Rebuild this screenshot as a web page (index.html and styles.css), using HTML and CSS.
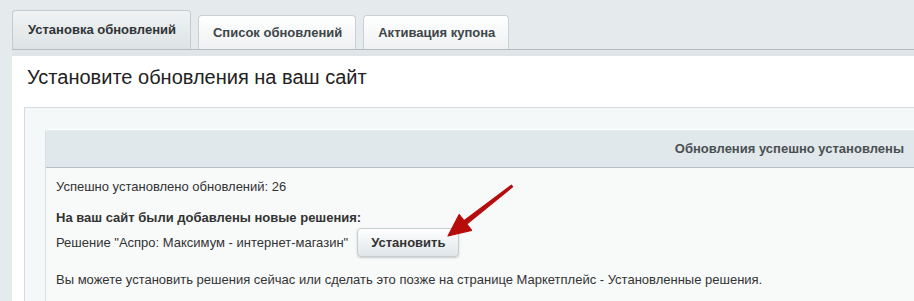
FILE: index.html
```html
<!DOCTYPE html>
<html lang="ru">
<head>
  <meta charset="UTF-8" />
  <title>Установка обновлений</title>
  <link rel="stylesheet" href="styles.css">
</head>
<body>

  <!-- вкладки -->
  <div class="tabs">
    <div class="tab active">Установка обновлений</div>
    <div class="tab">Список обновлений</div>
    <div class="tab">Активация купона</div>
  </div>
  <div class="tabs-bar"></div>

  <div class="panel">
    <h1 class="title">Установите обновления на ваш сайт</h1>

    <div class="inner">
      <div class="card">
        <div class="card-head">Обновления успешно установлены</div>
        <div class="card-body">
          <p class="line">Успешно установлено обновлений: 26</p>
          <p class="line bold">На ваш сайт были добавлены новые решения:</p>
          <div class="solution">
            <span>Решение "Аспро: Максимум - интернет-магазин"</span>
            <button class="btn">Установить</button>
          </div>
          <p class="line note">Вы можете установить решения сейчас или сделать это позже на странице Маркетплейс - Установленные решения.</p>
        </div>
      </div>
    </div>
  </div>

  <!-- стрелка поверх кнопки -->
  <svg class="arrow" width="80" height="66" viewBox="0 0 80 66">
    <polygon points="71.4,7.2 24.0,42.7 19.2,36.5 8,58 31.6,52.3 26.8,46.1 72.6,8.8"
             fill="#b70c0c" stroke="#b70c0c" stroke-width="1.2" stroke-linejoin="round"/>
  </svg>

</body>
</html>
```

FILE: styles.css
```css
* {
  box-sizing: border-box;
}

html, body {
  overflow: hidden;
  height: 301px;
}

body {
  margin: 0;
  background: #e5eaec;
  font-family: "Liberation Sans", Arial, sans-serif;
  color: #333;
  font-size: 13px;
}

.tabs {
  display: flex;
  align-items: flex-end;
  gap: 7px;
  padding: 10px 0 0 12px;
}

.tab {
  height: 34px;
  line-height: 33px;
  padding: 0 13px 0 14px;
  font-weight: bold;
  font-size: 13px;
  color: #3e4649;
  background: linear-gradient(to bottom, #ffffff, #eef1f2);
  border: 1px solid #c9d1d4;
  border-bottom: none;
  border-radius: 4px 4px 0 0;
}

.tab.active {
  height: 39px;
  line-height: 38px;
  padding: 0 14px 0 15px;
  color: #2f3436;
  background: linear-gradient(to bottom, #f0f3f4, #dde3e5);
  border-color: #c3ccd0;
}

.tabs-bar {
  margin-left: 12px;
  height: 7px;
  background: #e0e5e7;
  border-top: 1px solid #b4bec2;
}

.panel {
  margin: 0 -40px 0 12px;
  background: #fff;
  padding: 11px 12px 0;
  height: 245px;
}

.title {
  margin: 0 0 19px 3px;
  font-size: 20px;
  font-weight: normal;
  line-height: 21px;
  color: #222;
}

.inner {
  background: #f5f8f9;
  border: 1px solid #d3dbde;
  border-bottom: none;
  padding: 21px 20px 0;
  height: 194px;
}

.card {
  background: #f8fafa;
  border-left: 1px solid #d9e0e3;
  border-radius: 3px 0 0 0;
  height: 172px;
}

.card-head {
  height: 39px;
  line-height: 37px;
  background: #e0e8eb;
  border-top: 1px solid #fff;
  border-bottom: 1px solid #b5c0c5;
  border-radius: 3px 0 0 0;
  text-align: right;
  padding-right: 17px;
  font-weight: bold;
  color: #4a4f51;
}

.card-body {
  padding: 11px 10px 0;
}

.line {
  margin: 0;
  line-height: 16px;
}

.bold {
  margin-top: 15px;
  font-weight: bold;
}

.solution {
  display: flex;
  align-items: center;
  gap: 9px;
  margin-top: 2px;
}

.btn {
  height: 29px;
  padding: 0 13px;
  font-family: inherit;
  font-size: 13px;
  font-weight: bold;
  color: #333;
  background: linear-gradient(to bottom, #ffffff, #dfe6e9);
  border: 1px solid #c5ced2;
  border-radius: 4px;
  box-shadow: 0 1px 2px rgba(0, 0, 0, 0.2);
}

.note {
  margin-top: 15px;
}

.arrow {
  position: absolute;
  left: 440px;
  top: 178px;
}
```
